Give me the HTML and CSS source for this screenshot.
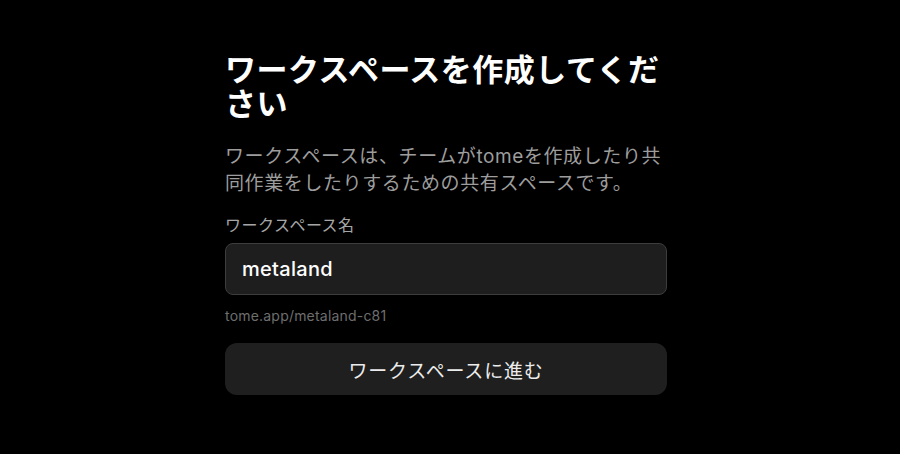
FILE: index.html
```html
<!DOCTYPE html>
<html lang="ja">
<head>
<meta charset="utf-8">
<link rel="stylesheet" href="styles.css">
</head>
<body>
<main class="page">
  <section class="card">
    <h1 class="title">ワークスペースを作成してください</h1>
    <p class="desc">ワークスペースは、チームがtomeを作成したり共同作業をしたりするための共有スペースです。</p>
    <label class="label" for="ws">ワークスペース名</label>
    <div class="input" id="ws">metaland</div>
    <div class="url">tome.app/metaland-c81</div>
    <button class="btn">ワークスペースに進む</button>
  </section>
</main>
</body>
</html>
```

FILE: styles.css
```css
html, body {
  margin: 0;
  padding: 0;
  background: #000;
  height: 100%;
}
body {
  font-family: Inter, "Noto Sans CJK JP", sans-serif;
  color: #fff;
}
.page {
  display: flex;
  justify-content: center;
  padding: 53px 8px 0 0;
}
.card {
  width: 442px;
  display: flex;
  flex-direction: column;
}
.title {
  margin: 0;
  font-size: 31px;
  line-height: 34px;
  letter-spacing: 0.5px;
  font-weight: 700;
  color: #fff;
}
.desc {
  margin: 22px 0 0;
  font-size: 19px;
  line-height: 27px;
  letter-spacing: 0.6px;
  color: #9d9d9d;
}
.label {
  margin-top: 17px;
  font-size: 16px;
  line-height: 22px;
  letter-spacing: 0.5px;
  color: #a6a6a6;
}
.input {
  margin-top: 7px;
  box-sizing: border-box;
  height: 52px;
  border: 1px solid #3d3d3d;
  border-radius: 8px;
  background: #1e1e1e;
  display: flex;
  align-items: center;
  padding-left: 16px;
  font-size: 20px;
  letter-spacing: 0.3px;
  font-weight: 500;
  color: #fff;
}
.url {
  margin-top: 11px;
  font-size: 14px;
  line-height: 20px;
  letter-spacing: 0.2px;
  color: #6e6e6e;
}
.btn {
  margin-top: 17px;
  height: 52px;
  border: none;
  border-radius: 12px;
  background: #1f1f1f;
  color: #ececec;
  font-family: inherit;
  font-size: 19px;
  letter-spacing: 0.8px;
  font-weight: 400;
  cursor: pointer;
}
```
